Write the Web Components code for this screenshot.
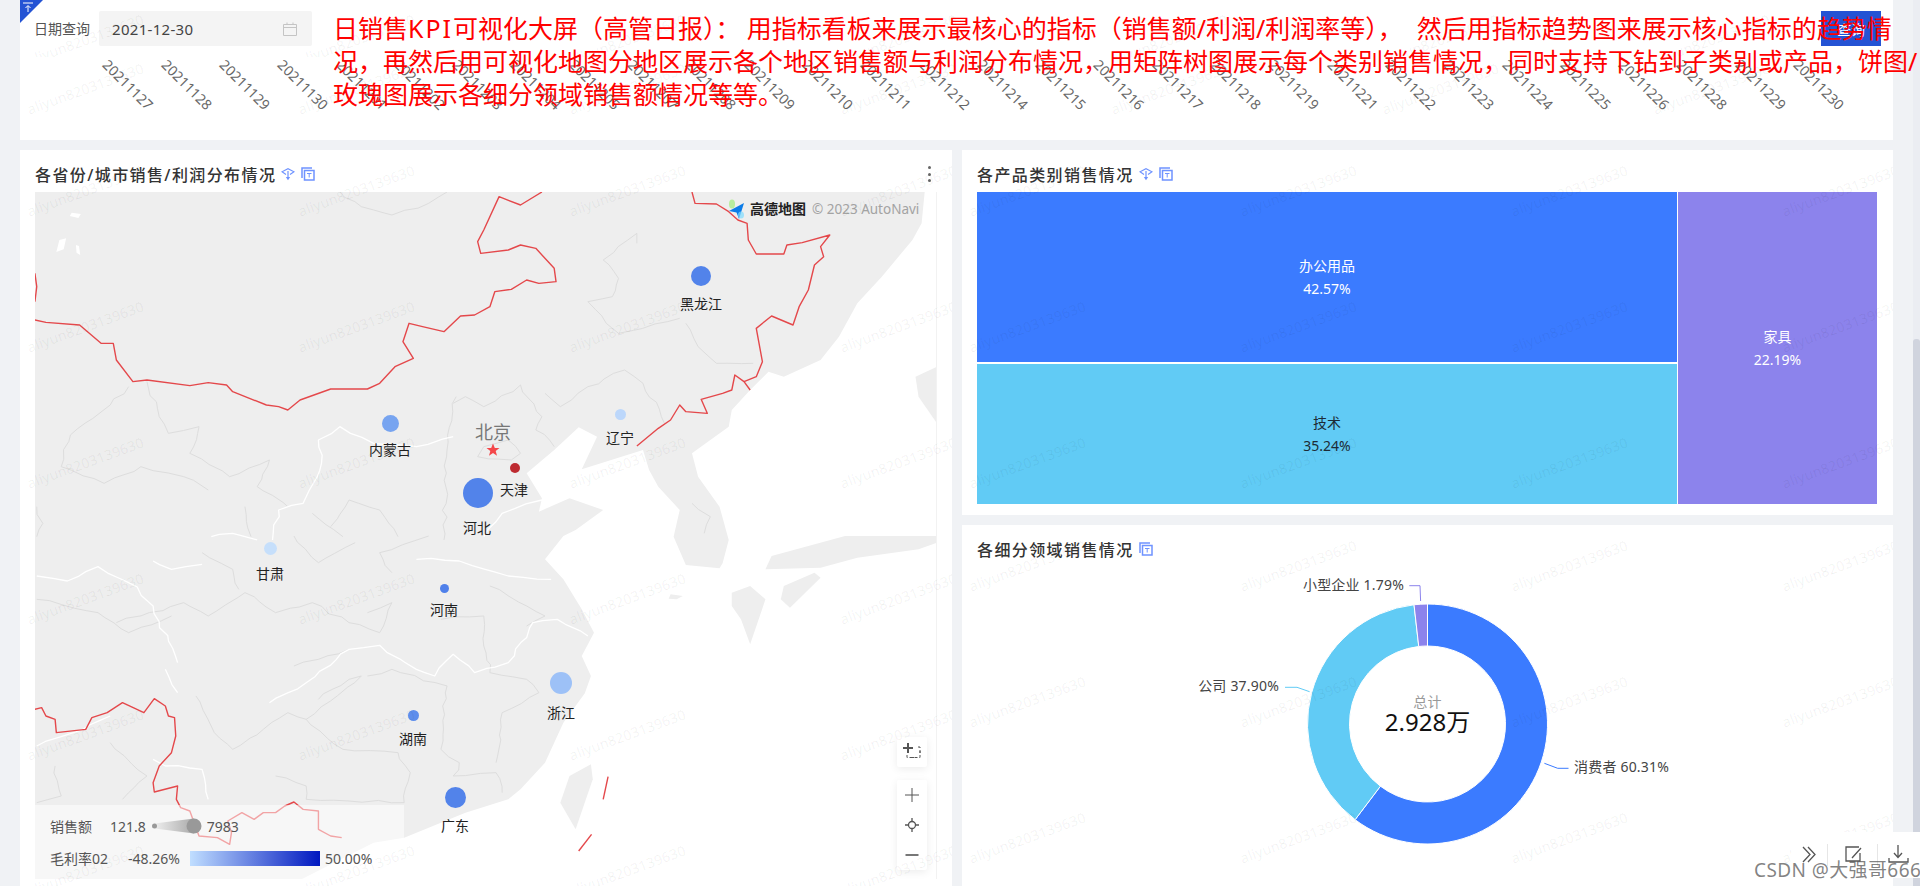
<!DOCTYPE html>
<html lang="zh">
<head>
<meta charset="utf-8">
<title>日销售KPI可视化大屏</title>
<style>
  html, body { margin: 0; height: 886px; overflow: hidden; background: #f0f2f5; }
  body { font-family: "Noto Sans", "Noto Sans CJK SC", sans-serif; font-size: 14px; color: #333; }
</style>
</head>
<body>
<dash-page>
  <top-bar></top-bar>
  <div slot="left">
    <dash-card heading="各省份/城市销售/利润分布情况" icons="drill copy" menu style="height:736px">
      <geo-map></geo-map>
    </dash-card>
  </div>
  <div slot="right">
    <dash-card heading="各产品类别销售情况" icons="drill copy" style="height:365px;margin-bottom:10px">
      <tree-chart></tree-chart>
    </dash-card>
    <dash-card heading="各细分领域销售情况" icons="copy" style="height:361px">
      <donut-chart></donut-chart>
    </dash-card>
  </div>
</dash-page>
<float-tools></float-tools>
<red-note></red-note>

<script>
// watermark repeated over each card
class WmLayer extends HTMLElement {
  connectedCallback() {
    this.attachShadow({ mode: 'open' });
    const oy = this.getAttribute('oy') || '-27.5';
    const rows = Number(this.getAttribute('rows') || 6);
    const cols = Number(this.getAttribute('cols') || 4);
    let cells = '';
    for (let i = 0; i < rows * cols; i++) {
      cells += '<div class="cell"><span>aliyun8203139630</span></div>';
    }
    this.shadowRoot.innerHTML = `
      <style>
        :host { position: absolute; left: 0; right: 0; top: 0; bottom: 0; overflow: hidden; pointer-events: none; display: block; }
        .grid { display: grid; grid-template-columns: repeat(${cols}, 271px); grid-auto-rows: 136px; margin: ${oy}px 0 0 -70px; }
        .cell { display: flex; align-items: center; justify-content: center; }
        span { font-size: 14px; letter-spacing: .2px; color: rgba(0,0,0,.06); transform: rotate(-20deg); white-space: nowrap; }
      </style>
      <div class="grid">${cells}</div>`;
  }
}
customElements.define('wm-layer', WmLayer);

class DashPage extends HTMLElement {
  connectedCallback() {
    this.attachShadow({ mode: 'open' });
    this.shadowRoot.innerHTML = `
      <style>
        :host { display: flex; height: 886px; overflow: hidden; }
        .main { flex: 1; padding: 0 20px; display: flex; flex-direction: column; gap: 10px; min-width: 0; }
        .row { display: flex; gap: 10px; }
        .left { width: 932px; }
        .right { width: 931px; }
        .bar { width: 7px; background: #ebedf2; }
        .thumb { margin-top: 339px; height: 547px; background: #d0d4de; border-radius: 3px 3px 0 0; }
      </style>
      <div class="main">
        <slot></slot>
        <div class="row">
          <div class="left"><slot name="left"></slot></div>
          <div class="right"><slot name="right"></slot></div>
        </div>
      </div>
      <div class="bar"><div class="thumb"></div></div>`;
  }
}
customElements.define('dash-page', DashPage);

class TopBar extends HTMLElement {
  connectedCallback() {
    this.attachShadow({ mode: 'open' });
    const days = ['1127','1128','1129','1130','1201','1202','1203','1204','1205','1207','1208','1209','1210','1211','1212',
      '1214','1215','1216','1217','1218','1219','1221','1222','1223','1224','1225','1226','1228','1229','1230'];
    this.shadowRoot.innerHTML = `
      <style>
        :host { display: block; height: 140px; background: #fff; position: relative; }
        .filter { height: 57px; box-sizing: border-box; padding: 11px 12px 0 14px; display: flex; position: relative; }
        .corner { position: absolute; left: 0; top: 0; }
        .label { width: 65px; height: 35px; line-height: 36px; color: #555; white-space: nowrap; }
        .input { width: 213px; height: 35px; background: #f4f4f4; border-radius: 2px; display: flex; align-items: center; justify-content: space-between; padding: 0 15px 0 13px; box-sizing: border-box; font-size: 15px; letter-spacing: .3px; color: #444; }
        .btn { margin-left: auto; width: 60px; height: 35px; background: #2453d4; color: #fff; display: flex; align-items: center; justify-content: center; }
        .axis { display: flex; padding: 17px 0 0 79.3px; }
        .axis div { width: 58.3px; flex: none; height: 20px; display: flex; align-items: center; justify-content: center; }
        .axis span { color: #666; font-size: 14px; transform: rotate(45deg); white-space: nowrap; }
        wm-layer.first { bottom: auto; height: 57px; }
        wm-layer.second { top: 57px; }
      </style>
      <div class="filter">
        <svg class="corner" width="23" height="23" viewBox="0 0 23 23">
          <path d="M0 0H23L0 23Z" fill="#2453d4"/>
          <path d="M3 3h10M8 12V6M5.500 8 8 5.500 10.500 8" fill="none" stroke="#fff" stroke-width="1"/>
        </svg>
        <div class="label">日期查询</div>
        <div class="input">
          <span>2021-12-30</span>
          <svg width="14" height="14" viewBox="0 0 14 14" fill="none" stroke="#c4c4c4"><path d="M.5 2.500h13v11H.5zM.5 5.500h13M4 .5v2M10 .5v2"/></svg>
        </div>
        <div class="btn">查询</div>
      </div>
      <div class="axis">${days.map(d => `<div><span>2021${d}</span></div>`).join('')}</div>
      <wm-layer class="first" cols="8" rows="1" oy="-28.5"></wm-layer>
      <wm-layer class="second" cols="8" rows="1" oy="-36.5"></wm-layer>`;
  }
}
customElements.define('top-bar', TopBar);

const CARD_ICONS = {
  drill: `<svg width="14" height="13" viewBox="0 0 14 13" fill="none" stroke="#6f93ff" stroke-width="1.200"><path d="M5 6.500 1 3.800 7 .7l6 3.100-4 2.700M7 3v6"/><path d="M4.800 9h4.400L7 12.300z" fill="#6f93ff" stroke="none"/></svg>`,
  copy: `<svg width="14" height="14" viewBox="0 0 14 14" fill="none" stroke="#6f93ff"><path d="M1 11V1h10" stroke-width="1.500"/><path d="M3.500 3.500h9.500v9.500H3.500z" stroke-width="1.500"/><path d="M6 6.500h4.500M8.200 6.500v4"/></svg>`
};

class DashCard extends HTMLElement {
  connectedCallback() {
    this.attachShadow({ mode: 'open' });
    const icons = (this.getAttribute('icons') || '').split(' ').filter(Boolean);
    this.shadowRoot.innerHTML = `
      <style>
        :host { display: block; background: #fff; position: relative; overflow: hidden; box-sizing: border-box; }
        .head { height: 42px; padding: 6px 15px 0; box-sizing: border-box; display: flex; align-items: center; }
        h3 { margin: 0; font-size: 16px; font-weight: 500; letter-spacing: 1.4px; color: #333; white-space: nowrap; }
        .ic { display: flex; margin-left: 5px; gap: 6px; align-items: center; }
        .ic svg { display: block; }
        .menu { margin-left: auto; width: 3px; display: flex; flex-direction: column; gap: 3.500px; margin-right: 6px; }
        .menu i { width: 3px; height: 3px; border-radius: 50%; background: #666; }
      </style>
      <div class="head">
        <h3>${this.getAttribute('heading')}</h3>
        <div class="ic">${icons.map(n => CARD_ICONS[n]).join('')}</div>
        ${this.hasAttribute('menu') ? '<div class="menu"><i></i><i></i><i></i></div>' : ''}
      </div>
      <slot></slot>
      <wm-layer rows="6" cols="4"></wm-layer>`;
  }
}
customElements.define('dash-card', DashCard);

// roughens a polyline so that province borders look hand traced
function jag(d, amp) {
  const nums = d.match(/-?[\d.]+/g).map(Number);
  let seed = nums.length * 7 + 3;
  const rnd = () => { seed = (seed * 9301 + 49297) % 233280; return seed / 233280 - 0.5; };
  let out = `M${nums[0]} ${nums[1]}`;
  for (let i = 2; i < nums.length; i += 2) {
    const x0 = nums[i - 2], y0 = nums[i - 1], x1 = nums[i], y1 = nums[i + 1];
    const n = Math.max(1, Math.round(Math.hypot(x1 - x0, y1 - y0) / 22));
    for (let k = 1; k <= n; k++) {
      const last = k === n;
      const x = x0 + (x1 - x0) * k / n + (last ? 0 : rnd() * amp);
      const y = y0 + (y1 - y0) * k / n + (last ? 0 : rnd() * amp);
      out += `L${x.toFixed(1)} ${y.toFixed(1)}`;
    }
  }
  return out;
}

class GeoMap extends HTMLElement {
  connectedCallback() {
    this.attachShadow({ mode: 'open' });
    // x, y are page coordinates, lx, ly the label centre
    const pins = [
      { x: 701, y: 275.7, r: 10, c: '#5283ea', t: '黑龙江', lx: 701, ly: 303 },
      { x: 390, y: 423, r: 8.5, c: '#77a4f0', t: '内蒙古', lx: 390, ly: 449 },
      { x: 620, y: 414, r: 5.5, c: '#bcd7fb', t: '辽宁', lx: 620, ly: 437 },
      { x: 515, y: 467.7, r: 5, c: '#bd2a30', t: '天津', lx: 514, ly: 489 },
      { x: 477.6, y: 492.7, r: 15, c: '#5283ea', t: '河北', lx: 477, ly: 527 },
      { x: 270, y: 548.7, r: 6.5, c: '#c6dffb', t: '甘肃', lx: 270, ly: 573 },
      { x: 444, y: 588, r: 4.5, c: '#4f80ea', t: '河南', lx: 444, ly: 609 },
      { x: 561, y: 682.7, r: 11, c: '#9dc1f7', t: '浙江', lx: 561, ly: 712 },
      { x: 413, y: 715, r: 5.5, c: '#5e8eec', t: '湖南', lx: 413, ly: 738 },
      { x: 455, y: 797, r: 10.5, c: '#5283ea', t: '广东', lx: 455, ly: 825 }
    ];
    const land = `M57 6H1510L1505 100 1490 150 1440 260 1400 340 1370 440 1340 510 1280 560 1255 545 1225 600 1195 660 1190 710 1130 790 1140 860 1175 950 1190 1050 1180 1120 1175 1135 1120 1125 1100 1040 1110 960 1075 890 1060 840 1050 780 950 838 975 740 945 712 905 780 860 850 885 925 880 965 930 925 985 960 940 1020 920 1038 890 1108 920 1168 950 1258 970 1328 950 1398 965 1458 955 1510 920 1598 890 1718 850 1798 830 1828 760 1868 660 1943 610 1958 490 2070H57Z`;
    const isles = [
      'M1530 1038 1380 1038 1260 1098 1250 1138 1340 1133 1400 1103 1500 1078 1530 1058Z',
      'M1195 1208 1225 1188 1250 1228 1225 1363 1210 1288 1195 1248Z',
      'M1280 1188 1330 1148 1340 1163 1290 1253 1275 1228Z',
      'M1495 560 1530 530V700L1500 620Z',
      'M1095 1213 1115 1218 1105 1228 1092 1226Z',
      'M930 1758 965 1723 968 1768 940 1918 915 1838Z'
    ];
    const grayTop = [
      'M1040 160 1040 130 985 210 1010 265 1000 320 960 335 990 400 1010 430 1110 385',
      'M1120 400 1140 470 1170 520 1230 520',
      'M890 610 915 650 960 590 1020 540 1050 580 1080 680 1085 700',
      'M740 640 760 620 790 650 850 585 885 680 875 720 905 770',
      'M745 620 730 780 725 1050',
      'M790 770 830 750 850 790 835 810 780 800 790 770',
      'M240 575 260 680 275 730 325 710 310 790 375 860 440 810 420 890 470 950',
      'M210 590 180 645 115 735 100 830 170 880 230 830 300 860 340 900',
      'M555 6 590 50 640 75 700 40 730 6',
      'M1130 940 1160 980 1150 1030',
      'M510 970 560 1040',
      'M400 950 410 1040',
      'M60 950 70 1000 60 1040',
      'M650 1040 620 960 570 930 540 1010'
    ];
    const whiteTop = [
      'M445 1050 455 960 495 940 525 820 520 750 555 710 610 760 680 770 740 740',
      'M885 930 820 970 790 1040',
      'M345 1040 380 1030 420 1050'
    ];
    const grayLow = [
      'M570 260 620 290 640 200 600 230',
      'M480 390 520 370 570 340',
      'M600 420 640 400 730 450 720 640 750 680 740 720 810 710 820 770',
      'M430 580 470 530 500 550 590 420',
      'M450 720 500 750 500 790 660 800',
      'M650 650 670 710 660 800',
      'M860 430 880 470 820 530 810 680',
      'M800 150 860 210 890 240 860 270',
      'M720 250 790 240 790 330 800 410',
      'M320 480 350 590 380 640 430 580',
      'M90 690 100 780 60 800',
      'M180 620 240 720 200 790',
      'M60 190 160 230 210 290 280 240',
      'M190 260 300 200 340 240 400 170 450 230 510 200 570 260',
      'M330 50 380 100 390 160',
      'M480 0 520 80 580 20',
      'M640 110 620 50 700 0',
      'M520 490 570 430 590 420',
      'M500 550 560 640 650 650',
      'M800 410 860 430'
    ];
    const whiteLow = [
      'M60 120 110 135 160 92 210 140 250 210 290 380',
      'M250 75 280 100 330 85',
      'M440 500 500 440 570 340 620 328 680 400 710 420 740 355 775 410 830 380 870 260 910 250 960 300',
      'M680 70 750 75 830 120 900 130',
      'M60 630 120 590 180 540',
      'M250 670 270 690 330 700 340 790',
      'M270 400 290 470'
    ];
    const redTop = [
      'M885 6 850 45 815 20 790 120 780 155 785 190 830 180 850 165 875 175 905 235 908 275 880 280 860 270 835 298 808 305 800 350 775 375 752 378 725 425 690 410 668 400 658 455 675 505 645 530 620 580 600 597 540 597 490 630 470 660 455 650 435 645 380 605 370 585 340 578 310 587 240 570 217 575 190 510 185 460 165 460 130 405 75 397 57 390',
      'M57 250 60 290 57 335',
      'M1130 6 1135 40 1170 42 1190 65 1205 90 1220 100 1222 150 1235 192 1280 192 1285 165 1310 158 1355 135 1340 170 1345 200 1330 225 1320 300 1305 350 1295 405 1260 378 1235 415 1245 515 1235 560 1215 575 1225 600M1215 575 1200 555 1195 600 1180 610 1145 628 1155 670 1120 665 1110 645 1095 690 1075 715 1040 768'
    ];
    const redLow = [
      'M57 520 68 515 75 540 90 550 92 590 140 580 150 545 175 530 200 500 235 530 252 488 270 510 275 540 285 545 287 600 280 650 260 690 250 740 252 768 290 750 288 790 295 815 310 825 325 900 355 905 375 925 378 890 372 855 395 830 415 850 430 830 450 830 465 810 480 798 495 820 520 825 520 880 540 900 558 905',
      'M993 722 985 790',
      'M966 895 945 945'
    ];
    const rough = (list, cls, amp) => list.map(d => `<path class="${cls}" d="${jag(d, amp)}"/>`).join('');
    const lines = (list, cls) => list.map(d => `<path class="${cls}" d="${d}"/>`).join('');
    this.shadowRoot.innerHTML = `
      <style>
        :host { display: block; position: relative; width: 902px; height: 687px; margin-left: 15px; overflow: hidden; }
        svg.geo { display: block; }
        path { fill: none; vector-effect: non-scaling-stroke; stroke-linejoin: round; }
        .land { fill: #eeeeee; }
        .g { stroke: #dddddd; stroke-width: 1; }
        .w { stroke: #fff; stroke-width: 1.300; }
        .r { stroke: #e4484b; stroke-width: 1.400; }
        .pin { position: absolute; border-radius: 50%; }
        .name { position: absolute; transform: translate(-50%, -50%); font-size: 14px; color: #222; white-space: nowrap; }
        .capital { position: absolute; transform: translate(-50%, -50%); font-size: 18px; color: #777; }
        .logo { position: absolute; left: 715px; top: 6px; font-size: 14px; font-weight: 700; color: #222; }
        .copy { position: absolute; left: 777px; top: 8px; font-size: 13.500px; color: #a3a3a3; white-space: nowrap; }
        .edge { position: absolute; right: 0; top: 0; bottom: 0; width: 1px; background: #f2f2f2; }
        .legend { position: absolute; left: 0; top: 613px; width: 369px; height: 74px; background: rgba(255,255,255,.5); box-sizing: border-box; padding: 5px 0 0 15px; color: #555; }
        .lrow { height: 32px; display: flex; align-items: center; white-space: nowrap; }
        .ramp { width: 130px; height: 15px; background: linear-gradient(90deg, #c0deff, #0018c0); margin: 0 5px 0 6px; }
        .tool { position: absolute; left: 862px; width: 30px; background: #fff; box-shadow: 0 2px 8px rgba(0,0,0,.08); border-radius: 2px; display: flex; flex-direction: column; }
        .tool svg { display: block; }
      </style>
      <svg class="geo" width="902" height="687" viewBox="35 192 902 687">
        <g transform="translate(0 190) scale(.61237 .33333)">
          <path class="land" d="${land}"/>
          ${isles.map(d => `<path class="land" d="${d}"/>`).join('')}
          <path d="M97 150 108 145 104 178 92 186Z" style="fill:#fff"/>
          <path d="M117 68 132 72 128 84 114 78Z" style="fill:#fff"/>
          <path d="M124 165 129 168 131 195 125 188Z" style="fill:#fff"/>
          ${rough(grayTop, 'g', 9)}${rough(whiteTop, 'w', 9)}${lines(redTop, 'r')}
        </g>
        <g transform="translate(0 536) scale(.61237 .33333)">
          ${rough(grayLow, 'g', 9)}${rough(whiteLow, 'w', 9)}${lines(redLow, 'r')}
        </g>
        <path d="M493 443.500 494.800 448H499.500L495.700 451 497 455.800 493 453 489 455.800 490.300 451 486.500 448H491.200Z" style="fill:#f4474a"/>
        <ellipse cx="732" cy="204" rx="3" ry="4.500" fill="#b7ec9e"/>
        <path d="M744 203 729 211 736.500 212.500 739 219Z" style="fill:#0b7ce8"/>
        <ellipse cx="741" cy="215" rx="3" ry="3.500" fill="#7fdcff" opacity=".7"/>
      </svg>
      ${pins.map(p => `<div class="pin" style="left:${p.x - 35 - p.r}px;top:${p.y - 192 - p.r}px;width:${p.r * 2}px;height:${p.r * 2}px;background:${p.c}"></div>
        <div class="name" style="left:${p.lx - 35}px;top:${p.ly - 192}px">${p.t}</div>`).join('')}
      <div class="capital" style="left:458px;top:239px">北京</div>
      <div class="logo">高德地图</div>
      <div class="copy">© 2023 AutoNavi</div>
      <div class="edge"></div>
      <div class="legend">
        <div class="lrow">
          <span style="width:60px">销售额</span><span>121.8</span>
          <svg width="52" height="18" viewBox="0 0 52 18" style="margin:0 5px 0 4px">
            <defs><linearGradient id="cone"><stop offset="0" stop-color="#eee"/><stop offset="1" stop-color="#aaa"/></linearGradient></defs>
            <path d="M4.500 6.500 44 1.500V16.500L4.500 11.500Z" style="fill:url(#cone)"/>
            <circle cx="4.500" cy="9" r="2.500" fill="#999"/><circle cx="44" cy="9" r="7.500" fill="#999"/>
          </svg>
          <span>7983</span>
        </div>
        <div class="lrow">
          <span style="width:78px">毛利率02</span><span style="width:56px">-48.26%</span>
          <div class="ramp"></div><span>50.00%</span>
        </div>
      </div>
      <div class="tool" style="top:545px;height:30px">
        <svg width="30" height="30" viewBox="0 0 30 30" fill="none" stroke="#555"><path d="M11 6v10M6 11h10" stroke-width="2"/><path d="M10 18v2.500h13V10h-3M23 14v2M14 20.500h3" stroke-width="1" stroke-dasharray="3 2"/></svg>
      </div>
      <div class="tool" style="top:588px;height:90px">
        <svg width="30" height="30" viewBox="0 0 30 30" fill="none" stroke="#555"><path d="M15 8v14M8 15h14"/></svg>
        <svg width="30" height="30" viewBox="0 0 30 30" fill="none" stroke="#555" stroke-width="1.300"><circle cx="15" cy="15" r="3.500"/><path d="M15 8v3.500M15 18.500V22M8 15h3.500M18.500 15H22"/></svg>
        <svg width="30" height="30" viewBox="0 0 30 30" fill="none" stroke="#555" stroke-width="1.600"><path d="M8.500 15h13"/></svg>
      </div>`;
  }
}
customElements.define('geo-map', GeoMap);

class TreeChart extends HTMLElement {
  connectedCallback() {
    this.attachShadow({ mode: 'open' });
    this.shadowRoot.innerHTML = `
      <style>
        :host { display: grid; margin-left: 15px; width: 900px; height: 312px; grid-template-columns: 701px 199px; grid-template-rows: 170px 140px; gap: 2px 0; }
        .cell { display: flex; flex-direction: column; align-items: center; justify-content: center; line-height: 23px; color: #fff; text-align: center; }
        .a { background: #3b7bff; border-right: 1px solid #fff; }
        .b { background: #61cbf5; color: #1d2b36; border-right: 1px solid #fff; }
        .c { background: #8c83ec; grid-column: 2; grid-row: 1 / 3; }
      </style>
      <div class="cell a"><span>办公用品</span><span>42.57%</span></div>
      <div class="cell c"><span>家具</span><span>22.19%</span></div>
      <div class="cell b"><span>技术</span><span>35.24%</span></div>`;
  }
}
customElements.define('tree-chart', TreeChart);

class DonutChart extends HTMLElement {
  connectedCallback() {
    this.attachShadow({ mode: 'open' });
    const cx = 1427.5, cy = 724, R = 120, r = 78;
    const parts = [
      { share: 60.31, color: '#3b7bff' },
      { share: 37.90, color: '#61cbf5' },
      { share: 1.79, color: '#8c83ec' }
    ];
    let start = 0;
    const arcs = parts.map(p => {
      const a0 = start * Math.PI / 50, a1 = (start + p.share) * Math.PI / 50;
      start += p.share;
      const big = p.share > 50 ? 1 : 0;
      const pt = (rad, a) => `${(cx + rad * Math.sin(a)).toFixed(2)} ${(cy - rad * Math.cos(a)).toFixed(2)}`;
      return `<path fill="${p.color}" stroke="#fff" d="M${pt(R, a0)}A${R} ${R} 0 ${big} 1 ${pt(R, a1)}L${pt(r, a1)}A${r} ${r} 0 ${big} 0 ${pt(r, a0)}Z"/>`;
    }).join('');
    this.shadowRoot.innerHTML = `
      <style>
        :host { display: block; }
        svg { display: block; }
        text { font-size: 14px; fill: #444; dominant-baseline: middle; letter-spacing: .2px; }
        .mid { text-anchor: middle; }
      </style>
      <svg width="931" height="319" viewBox="962 567 931 319">
        ${arcs}
        <path d="M1544.400 763.300 1557.700 768.300H1568.500" fill="none" stroke="#3b7bff"/>
        <path d="M1285 687.300H1297L1309.600 691.700" fill="none" stroke="#61cbf5"/>
        <path d="M1409.300 585.700H1420L1420.600 601" fill="none" stroke="#8c83ec"/>
        <text x="1574" y="768.500">消费者 60.31%</text>
        <text x="1279" y="687.500" text-anchor="end">公司 37.90%</text>
        <text x="1404" y="586" text-anchor="end">小型企业 1.79%</text>
        <text class="mid" x="${cx}" y="703.500" style="fill:#999">总计</text>
        <text class="mid" x="${cx}" y="724.500" style="font-size:24px;fill:#111;letter-spacing:0">2.928万</text>
      </svg>`;
  }
}
customElements.define('donut-chart', DonutChart);

class FloatTools extends HTMLElement {
  connectedCallback() {
    this.attachShadow({ mode: 'open' });
    this.shadowRoot.innerHTML = `
      <style>
        :host { position: absolute; left: 1791px; top: 832px; width: 129px; height: 46px; display: block; }
        .pill { height: 46px; background: #fff; border-radius: 23px 0 0 23px; display: flex; align-items: center; padding-left: 7px; box-sizing: border-box; }
        .pill svg { display: block; flex: none; }
        .sep { width: 1px; height: 22px; background: #e6e6e6; flex: none; }
        .mark { position: absolute; left: -37px; top: 23px; font-size: 19px; letter-spacing: .4px; color: rgba(90,90,90,.75); white-space: nowrap; }
      </style>
      <div class="pill">
        <svg width="29" height="24" viewBox="0 0 29 24" fill="none" stroke="#555" stroke-width="1.300"><path d="M5 4l7 7.500L5 19M10 4l7 7.500L10 19"/></svg>
        <div class="sep"></div>
        <svg width="49" height="24" viewBox="0 0 49 24" fill="none" stroke="#555" stroke-width="1.300"><path d="M31 4H18V18H32V10M33 5 24 15"/></svg>
        <div class="sep"></div>
        <svg width="42" height="24" viewBox="0 0 42 24" fill="none" stroke="#555" stroke-width="1.300"><path d="M20 2V14M16 10l4 4.500 4-4.500M11 15v4h19v-4"/></svg>
      </div>
      <div class="mark">CSDN @大强哥666</div>`;
  }
}
customElements.define('float-tools', FloatTools);

class RedNote extends HTMLElement {
  connectedCallback() {
    this.attachShadow({ mode: 'open' });
    this.shadowRoot.innerHTML = `
      <style>
        :host { position: absolute; left: 333px; top: 12px; display: block; font-size: 25px; line-height: 33px; color: #ff0000; white-space: nowrap; }
        .kpi { letter-spacing: 2px; }
        .gap { margin-right: 6px; }
        .gap2 { margin-right: 14px; }
      </style>
      日销售<span class="kpi">KPI</span>可视化大屏（高管日报）<span class="gap">：</span>用指标看板来展示最核心的指标（销售额/利润/利润率等）<span class="gap2">，</span>然后用指标趋势图来展示核心指标的趋势情<br>
      况，再然后用可视化地图分地区展示各个地区销售额与利润分布情况，用矩阵树图展示每个类别销售情况，同时支持下钻到子类别或产品，饼图/<br>
      玫瑰图展示各细分领域销售额情况等等。`;
  }
}
customElements.define('red-note', RedNote);
</script>
</body>
</html>
